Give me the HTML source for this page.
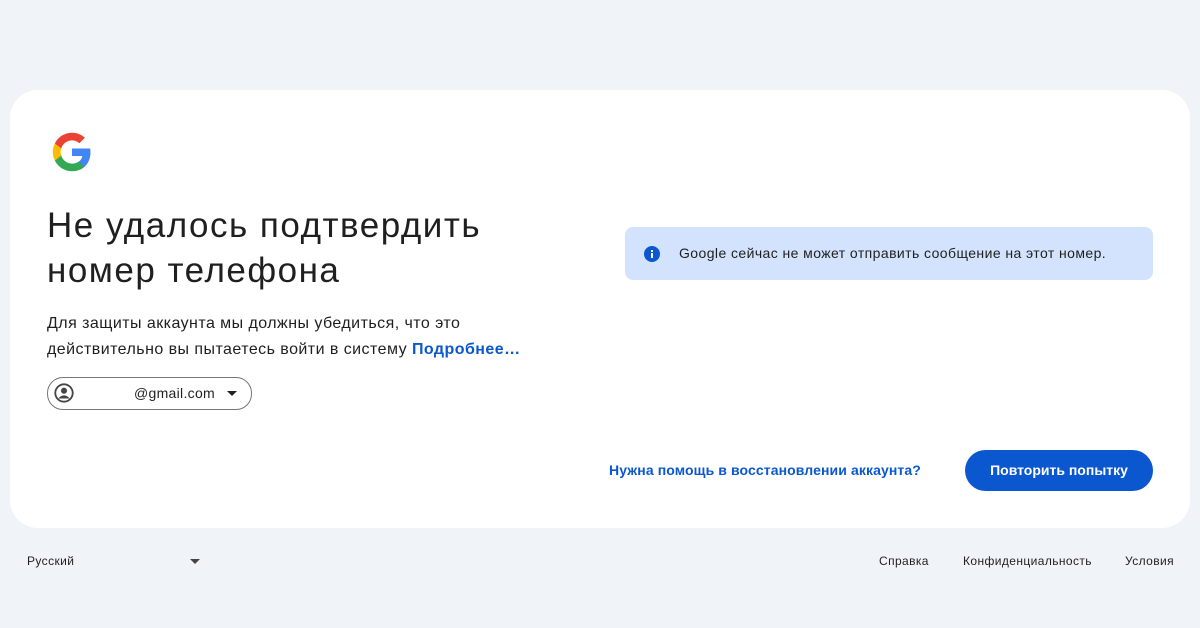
<!DOCTYPE html>
<html><head><meta charset="utf-8"><style>
body{margin:0;width:1200px;height:628px;background:#f0f4f9;font-family:"Liberation Sans",sans-serif;position:relative;overflow:hidden;color:#1f1f1f}
.card{position:absolute;left:10px;top:90px;width:1180px;height:438px;background:#fff;border-radius:28px}
.abs{position:absolute}
h1{position:absolute;left:47px;top:203px;margin:0;font-weight:400;font-size:35px;line-height:45px;letter-spacing:1.5px;color:#1f1f1f}
.p{left:47px;top:311px;font-size:16px;line-height:26px;color:#1f1f1f;letter-spacing:0.45px}
a{color:#0b57d0;text-decoration:none;font-weight:bold}
.chip{left:47px;top:377px;width:203px;height:31px;border:1px solid #747775;border-radius:16px}
.info{left:625px;top:227px;width:528px;height:53px;background:#d3e3fd;border-radius:8px}
.btn{left:965px;top:450px;width:188px;height:41px;background:#0b57d0;border-radius:21px;color:#fff;font-weight:bold;font-size:14px;line-height:41px;text-align:center}
.f{top:554px;font-size:12px;color:#1f1f1f;letter-spacing:0.4px}
</style></head><body>
<div class="card"></div>
<svg class="abs" style="left:51px;top:131px" width="42" height="42" viewBox="0 0 48 48">
<path fill="#4285F4" d="M45.1 24.5c0-1.6-.1-3.1-.4-4.5H24v8.5h11.8c-.5 2.8-2.1 5.1-4.4 6.7v5.5h7.1c4.2-3.8 6.6-9.5 6.6-16.2z"/>
<path fill="#34A853" d="M24 46c5.9 0 10.9-2 14.5-5.3l-7.1-5.5c-2 1.3-4.5 2.1-7.4 2.1-5.7 0-10.6-3.9-12.300-9.1H4.4v5.7C8 41.1 15.4 46 24 46z"/>
<path fill="#FBBC05" d="M11.7 28.2c-.4-1.3-.7-2.7-.7-4.2s.3-2.9.7-4.2v-5.7H4.4C2.9 17.1 2 20.4 2 24s.9 6.9 2.4 9.9l7.3-5.700z"/>
<path fill="#EA4335" d="M24 10.7c3.2 0 6.1 1.1 8.4 3.3l6.3-6.3C34.9 4.2 29.9 2 24 2 15.4 2 8 6.9 4.4 14.1l7.3 5.7c1.7-5.2 6.6-9.1 12.3-9.1z"/>
</svg>
<h1>Не удалось подтвердить<br>номер телефона</h1>
<div class="abs p">Для защиты аккаунта мы должны убедиться, что это<br>действительно вы пытаетесь войти в систему <a>Подробнее…</a></div>
<div class="abs chip">
<svg class="abs" style="left:5px;top:4px" width="22" height="22" viewBox="0 0 24 24"><circle cx="12" cy="12" r="9.5" fill="none" stroke="#444" stroke-width="2"/><circle cx="12" cy="9.5" r="3.3" fill="#444"/><path d="M6 18c1.5-2.3 3.700-3.3 6-3.3s4.5 1 6 3.3" fill="#444"/></svg>
<span class="abs" style="left:86px;top:7px;font-size:14px;letter-spacing:0.3px">@gmail.com</span>
<svg class="abs" style="left:179px;top:13px" width="10" height="6"><path d="M0 0h10L5 5z" fill="#1f1f1f"/></svg>
</div>
<div class="abs info">
<svg class="abs" style="left:19px;top:19px" width="16" height="16" viewBox="0 0 16 16"><circle cx="8" cy="8" r="8" fill="#0b57d0"/><rect x="7" y="7" width="2" height="5" fill="#fff"/><rect x="7" y="4" width="2" height="2" fill="#fff"/></svg>
<span class="abs" style="left:54px;top:18px;font-size:14px;color:#1f1f1f;letter-spacing:0.42px">Google сейчас не может отправить сообщение на этот номер.</span>
</div>
<a class="abs" style="left:609px;top:462px;font-size:14px;letter-spacing:0.1px">Нужна помощь в восстановлении аккаунта?</a>
<div class="abs btn">Повторить попытку</div>
<span class="abs f" style="left:27px">Русский</span>
<svg class="abs" style="left:190px;top:559px" width="10" height="5"><path d="M0 0h10L5 5z" fill="#444"/></svg>
<span class="abs f" style="left:879px">Справка</span>
<span class="abs f" style="left:963px">Конфиденциальность</span>
<span class="abs f" style="left:1125px">Условия</span>
</body></html>
